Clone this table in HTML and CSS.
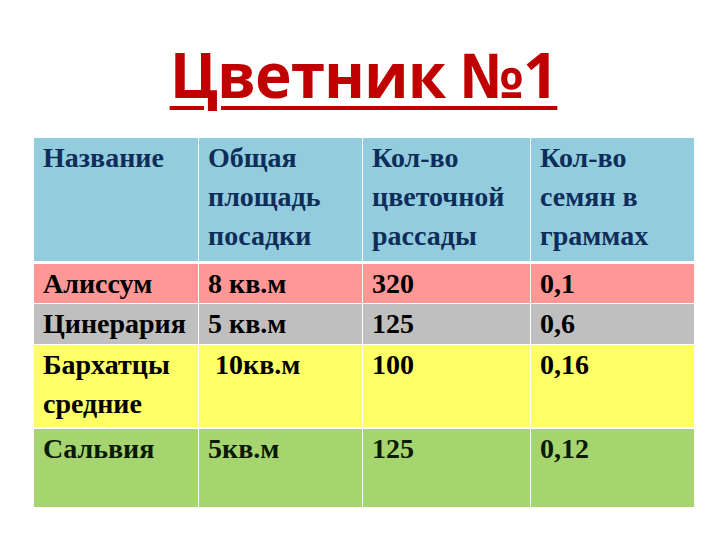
FILE: index.html
```html
<!DOCTYPE html>
<html lang="ru">
<head>
<meta charset="utf-8">
<link rel="stylesheet" href="styles.css">
</head>
<body>
<div class="slide">
  <h1 class="title">Цветник №1</h1>
  <table class="beds">
    <colgroup>
      <col class="c1"><col class="c2"><col class="c3"><col class="c4">
    </colgroup>
    <tr class="head">
      <td>Название</td>
      <td>Общая<br>площадь<br>посадки</td>
      <td>Кол-во<br>цветочной<br>рассады</td>
      <td>Кол-во<br>семян в<br>граммах</td>
    </tr>
    <tr class="pink">
      <td>Алиссум</td><td>8 кв.м</td><td>320</td><td>0,1</td>
    </tr>
    <tr class="grey">
      <td>Цинерария</td><td>5 кв.м</td><td>125</td><td>0,6</td>
    </tr>
    <tr class="yellow">
      <td>Бархатцы<br>средние</td><td>&nbsp;10кв.м</td><td>100</td><td>0,16</td>
    </tr>
    <tr class="green">
      <td>Сальвия</td><td>5кв.м</td><td>125</td><td>0,12</td>
    </tr>
  </table>
</div>
</body>
</html>
```
FILE: styles.css
```css
html, body {
  margin: 0;
  padding: 0;
  background: #ffffff;
}
.slide {
  width: 720px;
  height: 540px;
  padding: 0 0 0 33px;
  box-sizing: border-box;
}
.title {
  margin: 0;
  height: 137px;
  box-sizing: border-box;
  padding: 41px 0 0 0;
  width: 661px;
  text-align: center;
  font-family: "Open Sans", "Liberation Sans", sans-serif;
  font-weight: 700;
  font-size: 62px;
  line-height: 66px;
  letter-spacing: -1px;
  color: #c00000;
  text-decoration: underline;
  text-decoration-thickness: 4px;
  text-underline-offset: 8px;
}
.beds {
  border-collapse: collapse;
  table-layout: fixed;
  width: 661px;
  font-family: "Times New Roman", "Liberation Serif", "DejaVu Serif", serif;
  font-weight: 700;
  font-size: 28px;
  line-height: 39px;
  color: #000;
}
.c1 { width: 165px; }
.c2 { width: 164px; }
.c3 { width: 168px; }
.c4 { width: 164px; }
.beds td {
  border: 1px solid #ffffff;
  padding: 0 9px;
  vertical-align: top;
  white-space: nowrap;
}
.head td {
  background: #93cddd;
  color: #0f2d5a;
  height: 123px;
  border-bottom: 3px solid #ffffff;
}
.pink td {
  background: #ff9797;
  height: 39px;
}
.grey td {
  background: #bfbfbf;
  height: 40px;
}
.yellow td {
  background: #ffff66;
  height: 82px;
  border-bottom: 2px solid #ffffff;
}
.green td {
  background: #a6d46e;
  color: #0a1a05;
  height: 78px;
}
```
